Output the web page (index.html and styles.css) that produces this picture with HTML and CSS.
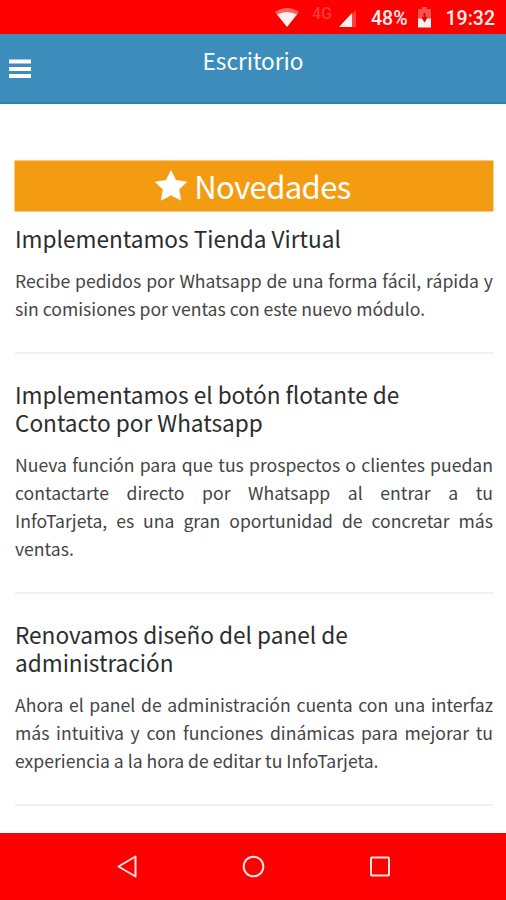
FILE: index.html
```html
<!DOCTYPE html>
<html lang="es">
<head>
<meta charset="utf-8">
<title>Escritorio</title>
<link rel="stylesheet" href="styles.css">
</head>
<body>
<div class="status">
  <svg class="wifi" width="24" height="20" viewBox="0 0 24 20"><path d="M0 4Q12-4 24 4L21.500 7.500H2.500Z" fill="#ff6060"/><path d="M2 6.500Q12 1.500 22 6.500L12 19Z" fill="#fff0f0"/></svg>
  <span class="network">4G</span>
  <svg class="signal" width="18" height="18" viewBox="0 0 18 18"><path d="M13 4L17 0V17H13Z" fill="#ff4040"/><path d="M0 17L13 3V17Z" fill="#fff0f0"/></svg>
  <span class="percent">48%</span>
  <svg class="battery" width="13" height="21" viewBox="0 0 13 21"><path d="M4 0h5v2h4v10H0V2h4z" fill="#ff5050"/><path d="M5.500 6h2v4h2l-3 6-3-6h2z" fill="#e00000"/><path d="M0 11.500h4l2.500 4 2.500-4h4v9H0z" fill="#fff0f0"/></svg>
  <span class="clock">19:32</span>
</div>
<header class="header">
  <svg class="menu" width="22" height="20" viewBox="0 0 22 20"><path d="M0 .5h22v4H0zM0 8h22v4H0zM0 15h22v4H0z" fill="#fff"/></svg>
  <h1 class="title">Escritorio</h1>
</header>
<main class="content">
  <h2 class="banner">
    <svg class="star" width="32" height="31" viewBox="0 0 32 31"><path d="M16 .5L20.900 10.300 31.700 11.900 23.900 19.400 25.800 30.200 16 25.100 6.200 30.200 8.100 19.400.3 11.900 11.100 10.300Z" fill="#fff" stroke="#fff" stroke-width=".6" stroke-linejoin="round"/></svg>
    <span class="banner-text">Novedades</span>
  </h2>
  <article class="item">
    <h3>Implementamos Tienda Virtual</h3>
    <p>Recibe pedidos por Whatsapp de una forma fácil, rápida y sin comisiones por ventas con este nuevo módulo.</p>
  </article>
  <article class="item">
    <h3>Implementamos el botón flotante de Contacto por Whatsapp</h3>
    <p>Nueva función para que tus prospectos o clientes puedan contactarte directo por Whatsapp al entrar a tu InfoTarjeta, es una gran oportunidad de concretar más ventas.</p>
  </article>
  <article class="item">
    <h3>Renovamos diseño del panel de administración</h3>
    <p>Ahora el panel de administración cuenta con una interfaz más intuitiva y con funciones dinámicas para mejorar tu experiencia a la hora de editar tu InfoTarjeta.</p>
  </article>
</main>
<nav class="navbar">
  <svg width="24" height="24" viewBox="0 0 24 24"><path d="M20.500 2.500V22.500L3.500 12.500Z" fill="none" stroke="#ffe4e4" stroke-width="2" stroke-linejoin="round"/></svg>
  <svg width="24" height="24" viewBox="0 0 24 24"><circle cx="12.500" cy="12.500" r="9.800" fill="none" stroke="#ffe4e4" stroke-width="2"/></svg>
  <svg width="24" height="24" viewBox="0 0 24 24"><rect x="4" y="3.500" width="18" height="18" rx="1" fill="none" stroke="#ffe4e4" stroke-width="2"/></svg>
</nav>
</body>
</html>
```
FILE: styles.css
```css
* { box-sizing: border-box; }
body {
  margin: 0;
  width: 506px;
  height: 900px;
  display: flex;
  flex-direction: column;
  overflow: hidden;
  background: #fff;
  color: #444;
  font-family: "Noto Sans CJK SC", "Noto Sans", sans-serif;
}
svg { display: block; flex: none; }
h1, h2, h3, p { margin: 0; font-weight: 400; }
.status {
  height: 34px;
  flex: none;
  display: flex;
  align-items: flex-start;
  justify-content: flex-end;
  padding-right: 11px;
  background: #f00;
  color: #fff0f0;
  font-family: Roboto, sans-serif;
  font-size: 19.5px;
  font-weight: 500;
  line-height: 24px;
}
.wifi { margin-top: 8px; }
.network { margin: 4px 0 0 13px; font-size: 16px; font-weight: 500; line-height: 20px; color: #ff3c3c; }
.signal { margin: 10px 0 0 7px; }
.percent { margin: 7px 0 0 14px; }
.battery { margin: 7px 0 0 10px; }
.clock { margin: 7px 0 0 15px; }
.header {
  height: 70px;
  flex: none;
  display: grid;
  grid-template-columns: 22px 1fr 22px;
  padding: 0 9px;
  background: #3c8dbc;
  border-bottom: 2px solid #2583b2;
  color: #fff;
}
.menu { margin-top: 25px; }
.title { margin-top: 11px; text-align: center; font-size: 22.6px; line-height: 32px; }
.content { flex: 1; padding: 57px 13px 0 15px; }
.banner {
  height: 50px;
  display: flex;
  justify-content: center;
  gap: 7px;
  padding-right: 2px;
  background: #f39c12;
  box-shadow: 0 0 0 0.5px #f39c12;
  color: #fff;
}
.star { margin-top: 9px; }
.banner-text { font-size: 31px; line-height: 49px; letter-spacing: -0.6px; }
.item { padding-bottom: 29px; border-bottom: 2px solid #f0f0f0; }
.item + .item { padding-top: 27px; }
h3 { max-width: 410px; font-size: 22.6px; line-height: 28px; color: #2c2c2c; }
.banner + .item { padding-top: 14px; }
.item p { margin-top: 14px; font-size: 17.6px; line-height: 28px; text-align: justify; }
.navbar {
  height: 67px;
  flex: none;
  display: flex;
  justify-content: center;
  gap: 102px;
  padding-top: 21px;
  background: #f00;
}
```
